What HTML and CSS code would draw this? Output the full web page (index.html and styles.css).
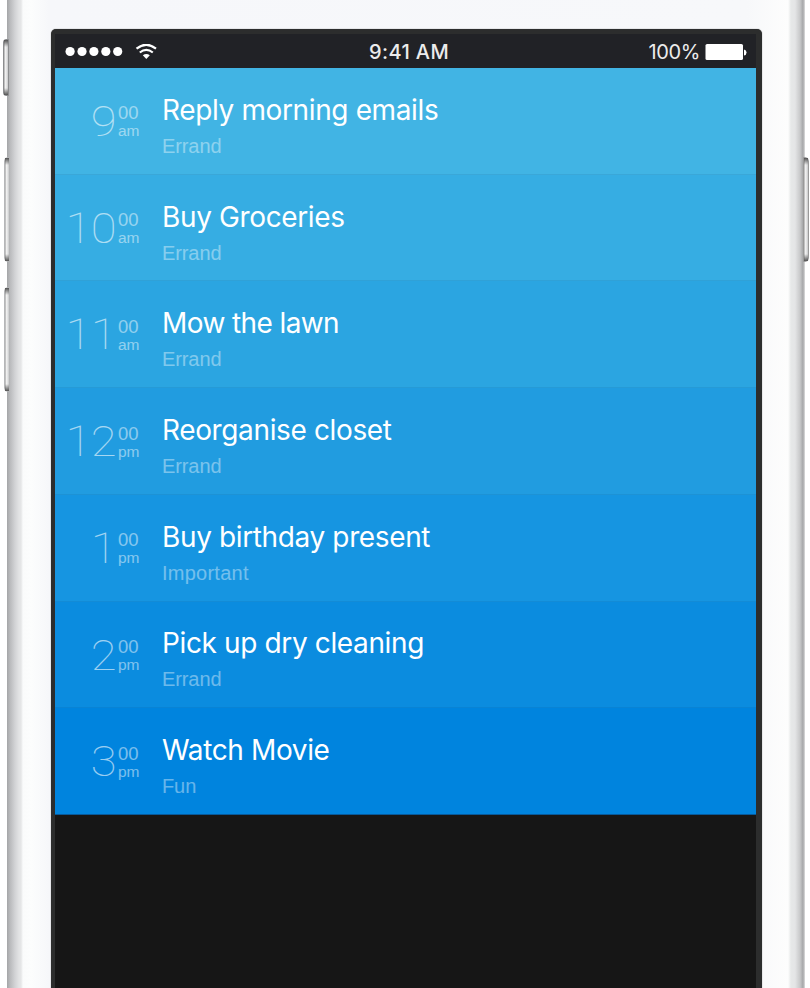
FILE: index.html
```html
<!DOCTYPE html>
<html lang="en">
<head>
<meta charset="utf-8">
<title>Clear day schedule</title>
<link rel="stylesheet" href="styles.css">
</head>
<body>
<div class="phone">
  <i class="key key-mute"></i><i class="key key-up"></i><i class="key key-down"></i><i class="key key-power"></i>
  <div class="bezel">
    <header class="status">
      <div class="signal">
        <svg width="92" height="16" viewBox="0 0 92 16" fill="#fff">
          <circle cx="5.1" cy="7.5" r="4.6"/><circle cx="17" cy="7.5" r="4.6"/><circle cx="28.9" cy="7.5" r="4.6"/><circle cx="40.8" cy="7.5" r="4.6"/><circle cx="52.7" cy="7.5" r="4.6"/>
          <g fill="none" stroke="#fff" stroke-width="2.2"><path d="M71.5 4.7Q81.3-3.2 91 4.7"/><path d="M74.8 8.5Q81.3 3.3 87.8 8.5"/></g>
          <path d="M77.8 11.2Q81.3 8.6 84.8 11.2L81.3 15Z"/>
        </svg>
      </div>
      <div class="clock">9:41 AM</div>
      <div class="power"><span>100%</span>
        <svg width="42" height="17" viewBox="0 0 42 17" fill="#fff"><rect x=".5" width="37.5" height="16" rx="1.6"/><path d="M39 5.5Q41.5 6 41.5 8.5T39 11.5Z"/></svg>
      </div>
    </header>
    <main class="list">
      <section class="row c1"><div class="hour">9</div><div class="min"><b>00</b><span>am</span></div><div class="task"><h2>Reply morning emails</h2><p>Errand</p></div></section>
      <section class="row c2"><div class="hour">10</div><div class="min"><b>00</b><span>am</span></div><div class="task"><h2>Buy Groceries</h2><p>Errand</p></div></section>
      <section class="row c3"><div class="hour">11</div><div class="min"><b>00</b><span>am</span></div><div class="task"><h2 class="snug">Mow the lawn</h2><p>Errand</p></div></section>
      <section class="row c4"><div class="hour">12</div><div class="min"><b>00</b><span>pm</span></div><div class="task"><h2>Reorganise closet</h2><p>Errand</p></div></section>
      <section class="row c5"><div class="hour">1</div><div class="min"><b>00</b><span>pm</span></div><div class="task"><h2>Buy birthday present</h2><p class="wide">Important</p></div></section>
      <section class="row c6"><div class="hour">2</div><div class="min"><b>00</b><span>pm</span></div><div class="task"><h2>Pick up dry cleaning</h2><p>Errand</p></div></section>
      <section class="row c7"><div class="hour">3</div><div class="min"><b>00</b><span>pm</span></div><div class="task"><h2>Watch Movie</h2><p>Fun</p></div></section>
    </main>
  </div>
</div>
</body>
</html>
```
FILE: styles.css
```css
* { box-sizing: border-box; }
body { margin: 0; height: 988px; overflow: hidden; background: #fff; font-family: Inter, sans-serif; }
.phone {
  position: relative; height: 988px; margin: 0 5px 0 7px; padding: 29px 43px 0 44px;
  background: linear-gradient(90deg, #a4a5a7 0, #b9babc 3px, #d2d3d5 8px, #e2e3e4 12px, #e5e6e7 14px, #fafbfb 16px, #fcfdfd 24px, #f6f7fa 42px, #f7f8fa 740px, #fdfdfd 781px, #e6e8e8 784px, #e4e5e6 788px, #c8c9ca 793px, #a5a6a8 796px, #dedede 798px);
}
.key { position: absolute; border: 1px solid #77797b; background: linear-gradient(90deg, #aaa, #f4f4f4 40%, #c8c9ca); }
.key::before, .key::after { content: ""; position: absolute; left: 0; right: 0; height: 7px; background: linear-gradient(#555, transparent); }
.key::before { top: 0; }
.key::after { bottom: 0; transform: scaleY(-1); }
.key-mute { left: -4px; top: 39px; width: 6px; height: 57px; border-radius: 3px 0 0 3px; border-color: #8c8d8f; }
.key-up { left: -3px; top: 157px; width: 6px; height: 105px; border-radius: 4px 0 0 4px; border-color: #b5b6b8; }
.key-down { left: -3px; top: 287px; width: 6px; height: 105px; border-radius: 4px 0 0 4px; border-color: #b5b6b8; }
.key-power { right: -4px; top: 157px; width: 6px; height: 105px; border-radius: 0 4px 4px 0; border-color: #999; }
.bezel { height: 959px; padding: 5px 6px 0 4px; border-radius: 5px 5px 0 0; background: #2c2d2d; box-shadow: 0 0 1px #555; }
.status { display: grid; grid-template-columns: 1fr auto 1fr; align-items: center; height: 34px; padding: 1px 9px 0 10px; background: #212226; color: #ececec; font-size: 20px; line-height: 34px; }
.signal { display: flex; }
.clock { margin-left: 6px; font-weight: 550; letter-spacing: .4px; }
.power { display: flex; justify-content: flex-end; align-items: center; gap: 5px; letter-spacing: -.4px; }
.list { height: 920px; background: #161616; }
.row { display: grid; grid-template-columns: 62px 26px 1fr; height: 106.72px; border-bottom: 1px solid rgba(0, 60, 120, .1); color: #fff; }
.hour { padding: 28px 1px 0 0; font: 100 43px/50px Roboto, sans-serif; letter-spacing: -.6px; text-align: right; transform: scaleX(1.1); transform-origin: right; opacity: .6; }
.min { display: flex; flex-direction: column; padding: 35.4px 0 0 1px; font-family: "Liberation Sans", sans-serif; opacity: .48; }
.min b { font-size: 18.5px; font-weight: 400; line-height: 20px; }
.min span { font-size: 15.5px; line-height: 16px; }
.task { padding: 24.8px 0 0 19px; }
.task h2 { margin: 0; font-size: 28px; font-weight: 400; line-height: 34px; letter-spacing: -.37px; }
.task .snug { letter-spacing: -.6px; }
.task p { margin: 7px 0 0; font: 20px/24px "Liberation Sans", sans-serif; letter-spacing: -.1px; opacity: .4; }
.task .wide { letter-spacing: .25px; }
.c1 { background: #41b4e4; }
.c2 { background: #36ade3; }
.c3 { background: #2ba5e1; }
.c4 { background: #219ce0; }
.c5 { background: #1695e1; }
.c6 { background: #0b8cdf; }
.c7 { background: #0084de; border-bottom-color: #07599a; }
```
